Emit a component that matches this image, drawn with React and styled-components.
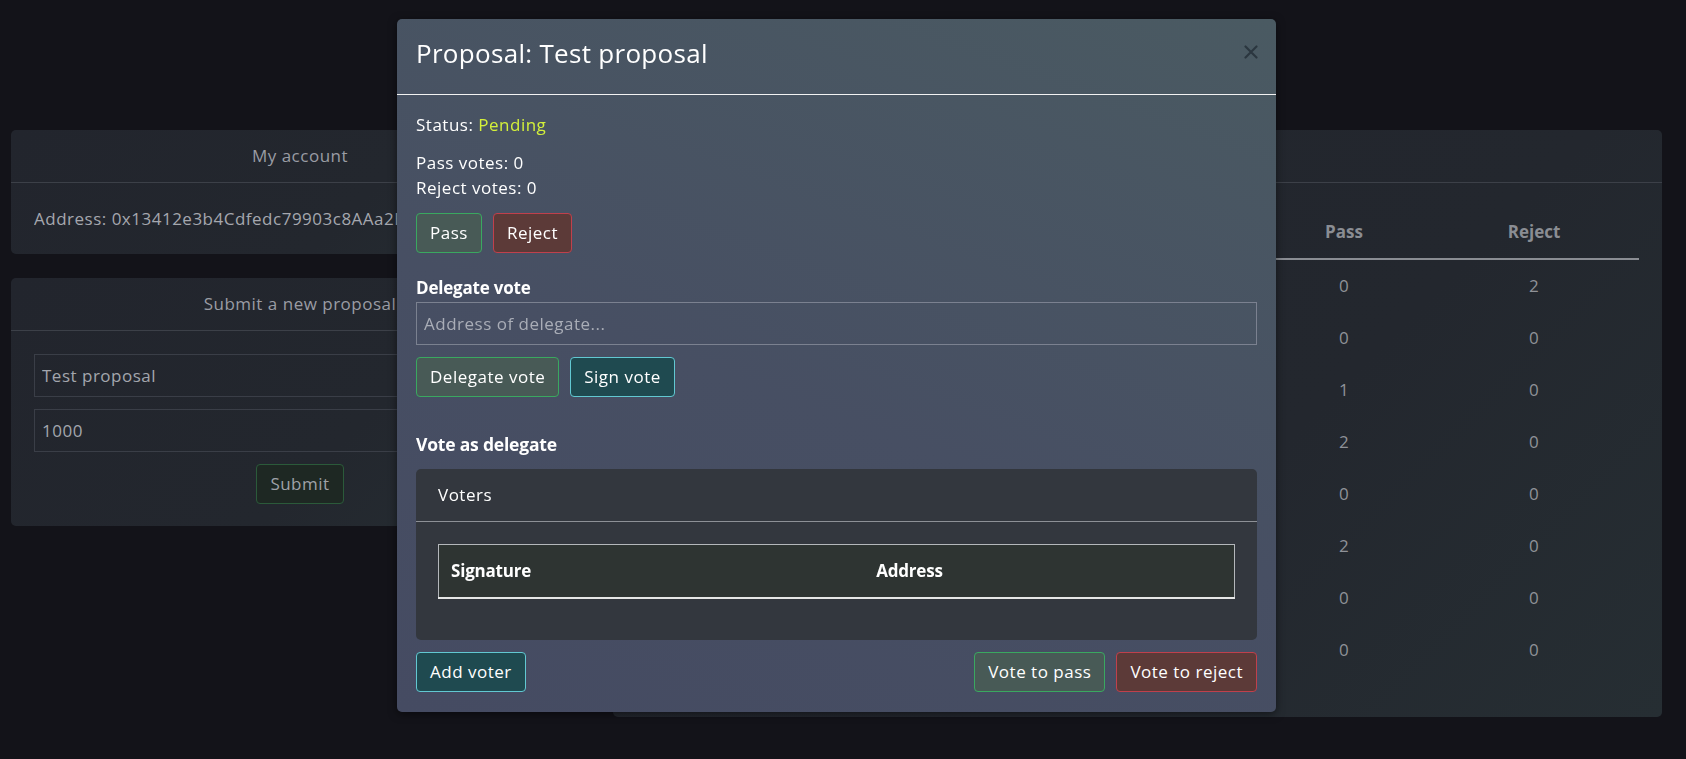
import React from "react";
import styled, { createGlobalStyle } from "styled-components";

const Global = createGlobalStyle`
  html, body { margin: 0; padding: 0; }
  body {
    background: #131319;
    font-family: "Open Sans", "Noto Sans", sans-serif;
    font-size: 17px;
    line-height: 1.5;
    letter-spacing: 0.5px;
    color: #e8e8ec;
  }
  * { box-sizing: border-box; }
`;

const Page = styled.div`
  position: relative;
  min-height: 759px;
  padding: 130px 24px 40px 11px;
  display: grid;
  grid-template-columns: 578px 1fr;
  gap: 24px;
  align-items: start;
`;

const Column = styled.div`
  display: flex;
  flex-direction: column;
  gap: 24px;
`;

const Card = styled.section`
  background: linear-gradient(135deg, #22252d 0%, #23272e 60%, #262e33 100%);
  border-radius: 5px;
  overflow: hidden;
`;

const CardHeader = styled.header`
  height: 53px;
  display: flex;
  align-items: center;
  justify-content: center;
  color: #9a9ca4;
  border-bottom: 1px solid #3c4048;
`;

const CardBody = styled.div`
  padding: 23px 23px 22px;
  display: flex;
  flex-direction: column;
  gap: 12px;
`;

const MutedText = styled.div`
  color: #a5a7ae;
  white-space: nowrap;
  overflow: hidden;
`;

const DarkInput = styled.input`
  height: 43px;
  width: 100%;
  background: transparent;
  border: 1px solid #3a3e47;
  color: #a3a6ad;
  font: inherit;
  letter-spacing: inherit;
  padding: 0 7px;
  outline: none;
`;

const SubmitButton = styled.button`
  align-self: center;
  height: 40px;
  padding: 0 13px;
  background: #1e2823;
  border: 1px solid #2b5a3a;
  border-radius: 4px;
  color: #9fa2a8;
  font: inherit;
  letter-spacing: inherit;
`;

const ProposalTable = styled.table`
  width: 100%;
  border-collapse: collapse;
  margin-bottom: 19px;
  color: #8f9298;
  text-align: center;
  th {
    font-weight: 700;
    letter-spacing: 0;
    color: #8a8d93;
    padding: 13px 8px;
    line-height: 26px;
    border-bottom: 2px solid #8a8d93;
  }
  td {
    padding: 13px 8px;
    line-height: 26px;
  }
`;

/* Modal */
const Overlay = styled.div`
  position: fixed;
  left: 397px;
  top: 19px;
  width: 879px;
  border-radius: 5px;
  background: linear-gradient(20deg, #454b62 0%, #474f63 45%, #4a5a62 100%);
  box-shadow: 0 2px 8px rgba(0, 0, 0, 0.5);
  color: #ffffff;
`;

const ModalHeader = styled.header`
  height: 76px;
  padding: 19px 19px 0;
  display: flex;
  align-items: flex-start;
  justify-content: space-between;
  border-bottom: 1px solid #f2f2f2;
`;

const ModalTitle = styled.h3`
  margin: 0;
  font-size: 26px;
  font-weight: 400;
  line-height: 31px;
  letter-spacing: 0.3px;
`;

const CloseButton = styled.button`
  width: 24px;
  height: 24px;
  margin-right: -6px;
  margin-top: 2px;
  padding: 0;
  border: 0;
  background: transparent;
  display: flex;
  align-items: center;
  justify-content: center;
`;

const ModalBody = styled.div`
  padding: 17px 19px 20px;
  display: flex;
  flex-direction: column;
`;

const Line = styled.p`
  margin: 0 0 ${(p) => p.$mb || 0}px;
  line-height: 25.5px;
`;

const Pending = styled.span`
  color: #d4f03a;
`;

const ButtonRow = styled.div`
  display: flex;
  gap: 11px;
  justify-content: ${(p) => (p.$spread ? "space-between" : "flex-start")};
  margin-top: ${(p) => p.$mt || 0}px;
`;

const Group = styled.div`
  display: flex;
  gap: 11px;
`;

const variants = {
  pass: { bg: "#485a56", border: "#3aa860" },
  reject: { bg: "#5c3a38", border: "#c0404c" },
  info: { bg: "#1f4a50", border: "#62c8d2" },
};

const ActionButton = styled.button`
  height: 40px;
  padding: 0 13px;
  border-radius: 4px;
  font: inherit;
  letter-spacing: inherit;
  line-height: 1;
  color: #ffffff;
  background: ${(p) => variants[p.$variant].bg};
  border: 1px solid ${(p) => variants[p.$variant].border};
`;

const SectionTitle = styled.h6`
  margin: ${(p) => p.$mt}px 0 0;
  font-size: ${(p) => p.$size || 17}px;
  font-weight: 700;
  line-height: 25px;
  letter-spacing: -0.2px;
`;

const DelegateInput = styled.input`
  height: 43px;
  width: 100%;
  margin-top: 2px;
  background: transparent;
  border: 1px solid #7b8190;
  color: #ffffff;
  font: inherit;
  letter-spacing: inherit;
  padding: 0 7px;
  outline: none;
  &::placeholder { color: #a9adb7; }
`;

const VotersCard = styled.div`
  margin-top: 12px;
  background: #33373e;
  border-radius: 5px;
  overflow: hidden;
`;

const VotersHeader = styled.div`
  height: 53px;
  padding: 0 22px;
  display: flex;
  align-items: center;
  border-bottom: 1px solid #8d9096;
`;

const VotersBody = styled.div`
  padding: 22px 22px 25px;
`;

const VotersTable = styled.table`
  width: 100%;
  border-collapse: collapse;
  background: #2e3432;
  border: 1px solid #b4b7bb;
  border-bottom: 2px solid #e6e6e6;
  margin-bottom: 16px;
  th {
    text-align: left;
    font-weight: 700;
    padding: 13px 12px;
    line-height: 26px;
    letter-spacing: -0.2px;
  }
`;

const rows = [
  ["0", "2"],
  ["0", "0"],
  ["1", "0"],
  ["2", "0"],
  ["0", "0"],
  ["2", "0"],
  ["0", "0"],
  ["0", "0"],
];

function CloseIcon() {
  return (
    <svg width="14" height="14" viewBox="0 0 14 14">
      <path d="M1.5 1.5 L12.5 12.5 M12.5 1.5 L1.5 12.5" stroke="#26313a" strokeWidth="2.2" strokeLinecap="round" opacity="0.85" />
    </svg>
  );
}

export default function App() {
  return (
    <>
      <Global />
      <Page>
        <Column>
          <Card>
            <CardHeader>My account</CardHeader>
            <CardBody>
              <MutedText>Address: 0x13412e3b4Cdfedc79903c8AAa2E6Fa4d3eB5A1c</MutedText>
            </CardBody>
          </Card>
          <Card>
            <CardHeader>Submit a new proposal</CardHeader>
            <CardBody>
              <DarkInput defaultValue="Test proposal" />
              <DarkInput defaultValue="1000" />
              <SubmitButton>Submit</SubmitButton>
            </CardBody>
          </Card>
        </Column>
        <Card>
          <CardHeader>Proposals</CardHeader>
          <CardBody>
            <ProposalTable>
              <colgroup>
                <col />
                <col style={{ width: 190 }} />
                <col style={{ width: 190 }} />
                <col style={{ width: 170 }} />
                <col style={{ width: 210 }} />
              </colgroup>
              <thead>
                <tr>
                  <th>Title</th>
                  <th>Amount</th>
                  <th>Status</th>
                  <th>Pass</th>
                  <th>Reject</th>
                </tr>
              </thead>
              <tbody>
                {rows.map((r, i) => (
                  <tr key={i}>
                    <td>Proposal {i + 1}</td>
                    <td>1000</td>
                    <td>Pending</td>
                    <td>{r[0]}</td>
                    <td>{r[1]}</td>
                  </tr>
                ))}
              </tbody>
            </ProposalTable>
          </CardBody>
        </Card>

        <Overlay role="dialog">
          <ModalHeader>
            <ModalTitle>Proposal: Test proposal</ModalTitle>
            <CloseButton aria-label="Close">
              <CloseIcon />
            </CloseButton>
          </ModalHeader>
          <ModalBody>
            <Line $mb={12}>
              Status: <Pending>Pending</Pending>
            </Line>
            <Line>Pass votes: 0</Line>
            <Line>Reject votes: 0</Line>
            <ButtonRow $mt={12}>
              <ActionButton $variant="pass">Pass</ActionButton>
              <ActionButton $variant="reject">Reject</ActionButton>
            </ButtonRow>
            <SectionTitle $mt={22}>Delegate vote</SectionTitle>
            <DelegateInput placeholder="Address of delegate..." />
            <ButtonRow $mt={12}>
              <ActionButton $variant="pass">Delegate vote</ActionButton>
              <ActionButton $variant="info">Sign vote</ActionButton>
            </ButtonRow>
            <SectionTitle $mt={35} $size={17.5}>Vote as delegate</SectionTitle>
            <VotersCard>
              <VotersHeader>Voters</VotersHeader>
              <VotersBody>
                <VotersTable>
                  <thead>
                    <tr>
                      <th>Signature</th>
                      <th>Address</th>
                    </tr>
                  </thead>
                </VotersTable>
              </VotersBody>
            </VotersCard>
            <ButtonRow $mt={12} $spread>
              <ActionButton $variant="info">Add voter</ActionButton>
              <Group>
                <ActionButton $variant="pass">Vote to pass</ActionButton>
                <ActionButton $variant="reject">Vote to reject</ActionButton>
              </Group>
            </ButtonRow>
          </ModalBody>
        </Overlay>
      </Page>
    </>
  );
}
